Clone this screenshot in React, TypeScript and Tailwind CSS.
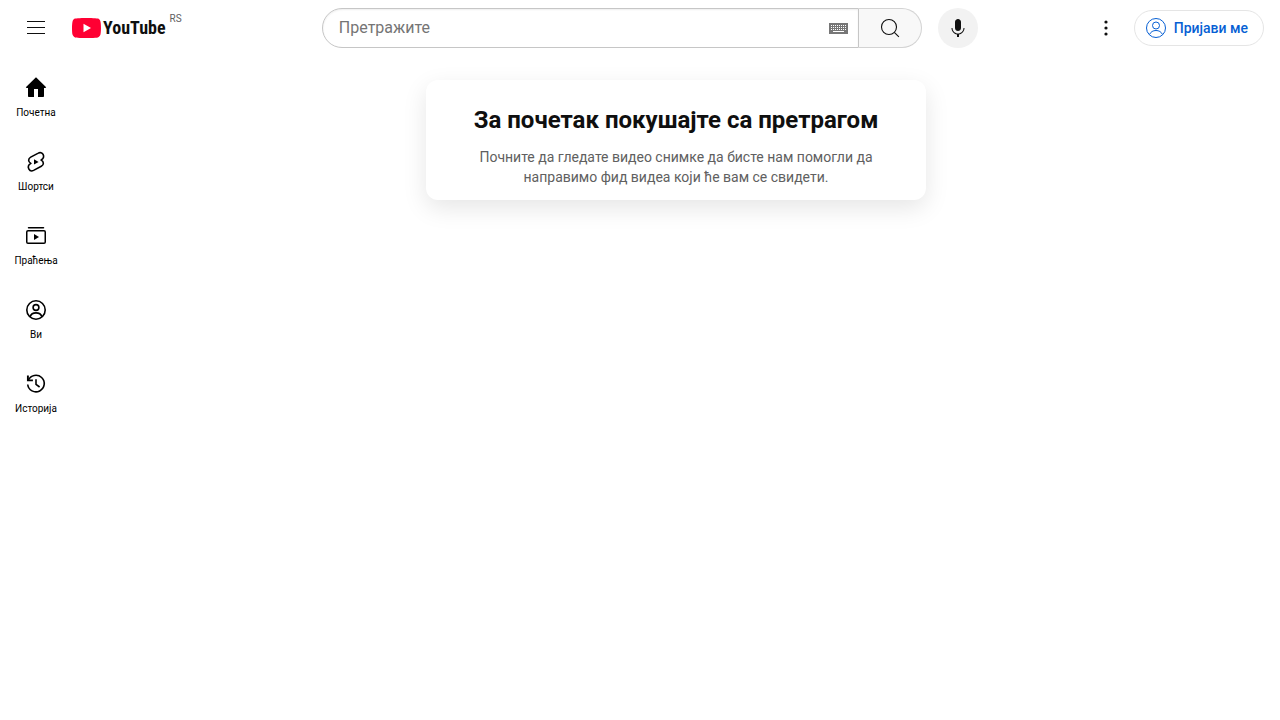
import type { ReactNode } from 'react';

function HomeIcon() {
  return (
    <svg viewBox="0 0 24 24" className="size-6" fill="currentColor" aria-hidden="true">
      <path d="M12 1.3 22.2 11.2 21.4 12H20v8.2a.8.8 0 0 1-.8.8H14v-8h-4v8H4.8a.8.8 0 0 1-.8-.8V12H2.6l-.8-.8z" />
    </svg>
  );
}

function ShortsIcon() {
  return (
    <svg viewBox="0 0 24 24" className="size-6" fill="none" stroke="currentColor" strokeWidth="1.6" strokeLinejoin="round" aria-hidden="true">
      <path d="M14.3 3.1 6.7 7.1C4 8.6 3.9 11.900 6.900 13.400 4 15 4 17.400 4.900 19.100s2.900 2.200 4.700 1.300l7.700-4.100C20 14.800 20.100 11.500 17.100 10 20 8.500 20 6.100 19.100 4.400s-3-2.300-4.800-1.300z" />
      <path d="M10 9.200v5.400l4.600-2.700z" fill="currentColor" stroke="none" />
    </svg>
  );
}

function SubscriptionsIcon() {
  return (
    <svg viewBox="0 0 24 24" className="size-6" fill="none" stroke="currentColor" strokeWidth="1.5" aria-hidden="true">
      <path d="M4.5 3.75h15" strokeLinecap="round" />
      <rect x="2.75" y="6.75" width="18.5" height="12.5" rx="1.25" />
      <path d="M10 10v6l5-3z" fill="currentColor" stroke="none" />
    </svg>
  );
}

function YouIcon() {
  return (
    <svg viewBox="0 0 24 24" className="size-6" fill="none" stroke="currentColor" strokeWidth="1.6" aria-hidden="true">
      <circle cx="12" cy="12" r="9.2" />
      <circle cx="12" cy="9.5" r="2.9" />
      <path d="M6 18.8c.9-2.5 3.2-3.9 6-3.9s5.1 1.4 6 3.9" />
    </svg>
  );
}

function HistoryIcon() {
  return (
    <svg viewBox="0 0 24 24" className="size-6" fill="none" stroke="currentColor" strokeWidth="1.6" aria-hidden="true">
      <path d="M4.3 8.3A8.3 8.3 0 1 1 3.7 12.5" />
      <path d="M3.9 3.5v4.9h5" strokeWidth="1.9" />
      <path d="M12 7.2v5.1l3.6 2.7" />
    </svg>
  );
}

function KeyboardIcon() {
  const rows = [2, 4, 6];
  const columns = [2, 4, 6, 8, 10, 12, 14, 16];
  return (
    <svg viewBox="0 0 19 11" width="19" height="11" shapeRendering="crispEdges" aria-hidden="true">
      <rect width="19" height="11" fill="#777" />
      {rows.map((y) => columns.map((x) => <rect key={`${x}-${y}`} x={x} y={y} width="1" height="1" fill="#fff" />))}
      <rect x="4" y="8" width="11" height="1" fill="#fff" />
    </svg>
  );
}

function Logo() {
  return (
    <a href="/" aria-label="YouTube" className="flex items-start">
      <span className="flex items-center gap-0.5">
        <svg viewBox="0 0 29 20" width="29" height="20" aria-hidden="true">
          <path
            fill="#FF0033"
            d="M14.485 20s9.085 0 11.338-.6c1.269-.34 2.223-1.320 2.558-2.530C29 14.650 29 9.980 29 9.980s0-4.640-.619-6.840C28.046 1.900 27.092.940 25.823.610 23.570 0 14.485 0 14.485 0S5.420 0 3.171.610C1.929.940.954 1.900.599 3.140 0 5.340 0 9.980 0 9.980s0 4.670.599 6.890c.355 1.210 1.330 2.190 2.572 2.530C5.420 20 14.485 20 14.485 20Z"
          />
          <path fill="#fff" d="M19 10l-7.500-4.250v8.500z" />
        </svg>
        <span className="font-['Roboto_Condensed','Liberation_Sans_Narrow',Roboto,sans-serif] text-lg leading-5 font-bold">
          YouTube
        </span>
      </span>
      <span className="-mt-1.5 ml-1 text-[10px] leading-[14px] text-[#606060]">RS</span>
    </a>
  );
}

function Header() {
  return (
    <header className="flex h-14 items-center justify-between px-4">
      <div className="flex w-[198px] shrink-0 items-center gap-4">
        <button type="button" aria-label="Мени" className="flex size-10 items-center justify-center rounded-full">
          <svg viewBox="0 0 24 24" className="size-6" fill="currentColor" aria-hidden="true">
            <path d="M21 6H3V5h18v1zm0 5H3v1h18v-1zm0 6H3v1h18v-1z" />
          </svg>
        </button>
        <Logo />
      </div>

      <div className="flex max-w-[656px] flex-1 items-center gap-4">
        <form role="search" className="flex h-10 min-w-0 flex-1">
          <div className="flex min-w-0 flex-1 items-center rounded-l-full border border-[#c6c6c6] pr-2.5 pl-4 shadow-[inset_0_1px_2px_#eeeeee]">
            <input
              type="text"
              aria-label="Претражите"
              placeholder="Претражите"
              className="min-w-0 flex-1 bg-transparent text-base leading-6 outline-none placeholder:text-[#757575]"
            />
            <button type="button" aria-label="Тастатура">
              <KeyboardIcon />
            </button>
          </div>
          <button
            type="submit"
            aria-label="Претрага"
            className="flex w-[63px] items-center justify-center rounded-r-full border border-l-0 border-[#d3d3d3] bg-[#f8f8f8]"
          >
            <svg viewBox="0 0 24 24" className="size-6" fill="none" stroke="currentColor" strokeWidth="1.1" aria-hidden="true">
              <circle cx="11" cy="11" r="7.5" />
              <path d="M16.3 16.3l4.6 4.6" />
            </svg>
          </button>
        </form>
        <button
          type="button"
          aria-label="Претражите гласом"
          className="flex size-10 shrink-0 items-center justify-center rounded-full bg-[#f2f2f2]"
        >
          <svg viewBox="0 0 24 24" className="size-6" fill="currentColor" aria-hidden="true">
            <path d="M12 3c-1.660 0-3 1.370-3 3.070v5.860c0 1.700 1.340 3.070 3 3.070s3-1.370 3-3.070V6.070C15 4.370 13.660 3 12 3zM18.500 12h-1c0 3.030-2.470 5.500-5.500 5.500S6.500 15.030 6.500 12h-1c0 3.240 2.390 5.930 5.500 6.410V21h2v-2.590c3.110-.480 5.500-3.170 5.500-6.410z" />
          </svg>
        </button>
      </div>

      <div className="flex shrink-0 items-center gap-2">
        <button type="button" aria-label="Подешавања" className="flex size-10 items-center justify-center rounded-full">
          <svg viewBox="0 0 24 24" className="size-6" fill="currentColor" aria-hidden="true">
            <circle cx="12" cy="6" r="1.6" />
            <circle cx="12" cy="12" r="1.6" />
            <circle cx="12" cy="18" r="1.6" />
          </svg>
        </button>
        <a
          href="/signin"
          className="flex h-9 items-center gap-1.5 rounded-full border border-[#e5e5e5] pr-[15px] pl-[9px] text-sm font-medium text-[#065fd4]"
        >
          <svg viewBox="0 0 24 24" className="size-6" fill="none" stroke="currentColor" aria-hidden="true">
            <circle cx="12" cy="12" r="9.5" />
            <circle cx="12" cy="9.5" r="3.5" />
            <path d="M5.5 18.5c1.2-2.7 3.6-4 6.5-4s5.3 1.3 6.5 4" />
          </svg>
          Пријави ме
        </a>
      </div>
    </header>
  );
}

const guideEntries: { label: string; href: string; icon: ReactNode }[] = [
  { label: 'Почетна', href: '/', icon: <HomeIcon /> },
  { label: 'Шортси', href: '/shorts', icon: <ShortsIcon /> },
  { label: 'Праћења', href: '/subscriptions', icon: <SubscriptionsIcon /> },
  { label: 'Ви', href: '/you', icon: <YouIcon /> },
  { label: 'Историја', href: '/history', icon: <HistoryIcon /> },
];

export default function App() {
  return (
    <div className="min-h-screen bg-white font-[Roboto,sans-serif] text-[#0f0f0f]">
      <Header />
      <div className="flex">
        <nav className="w-[72px] shrink-0 px-1 pt-1">
          {guideEntries.map((entry) => (
            <a
              key={entry.href}
              href={entry.href}
              className="flex flex-col items-center gap-1.5 rounded-lg pt-4 pb-3.5 text-[10px] leading-[14px] text-black"
            >
              {entry.icon}
              {entry.label}
            </a>
          ))}
        </nav>
        <main className="flex min-w-0 flex-1 justify-center pt-6">
          <section className="w-full max-w-[500px] self-start rounded-xl bg-white px-10 pt-6 pb-[13px] text-center shadow-[0_8px_24px_rgba(0,0,0,0.1)]">
            <h1 className="mb-[11px] text-2xl leading-8 font-bold">За почетак покушајте са претрагом</h1>
            <p className="text-sm leading-5 text-[#606060]">
              Почните да гледате видео снимке да бисте нам помогли да направимо фид видеа који ће вам се свидети.
            </p>
          </section>
        </main>
      </div>
    </div>
  );
}
